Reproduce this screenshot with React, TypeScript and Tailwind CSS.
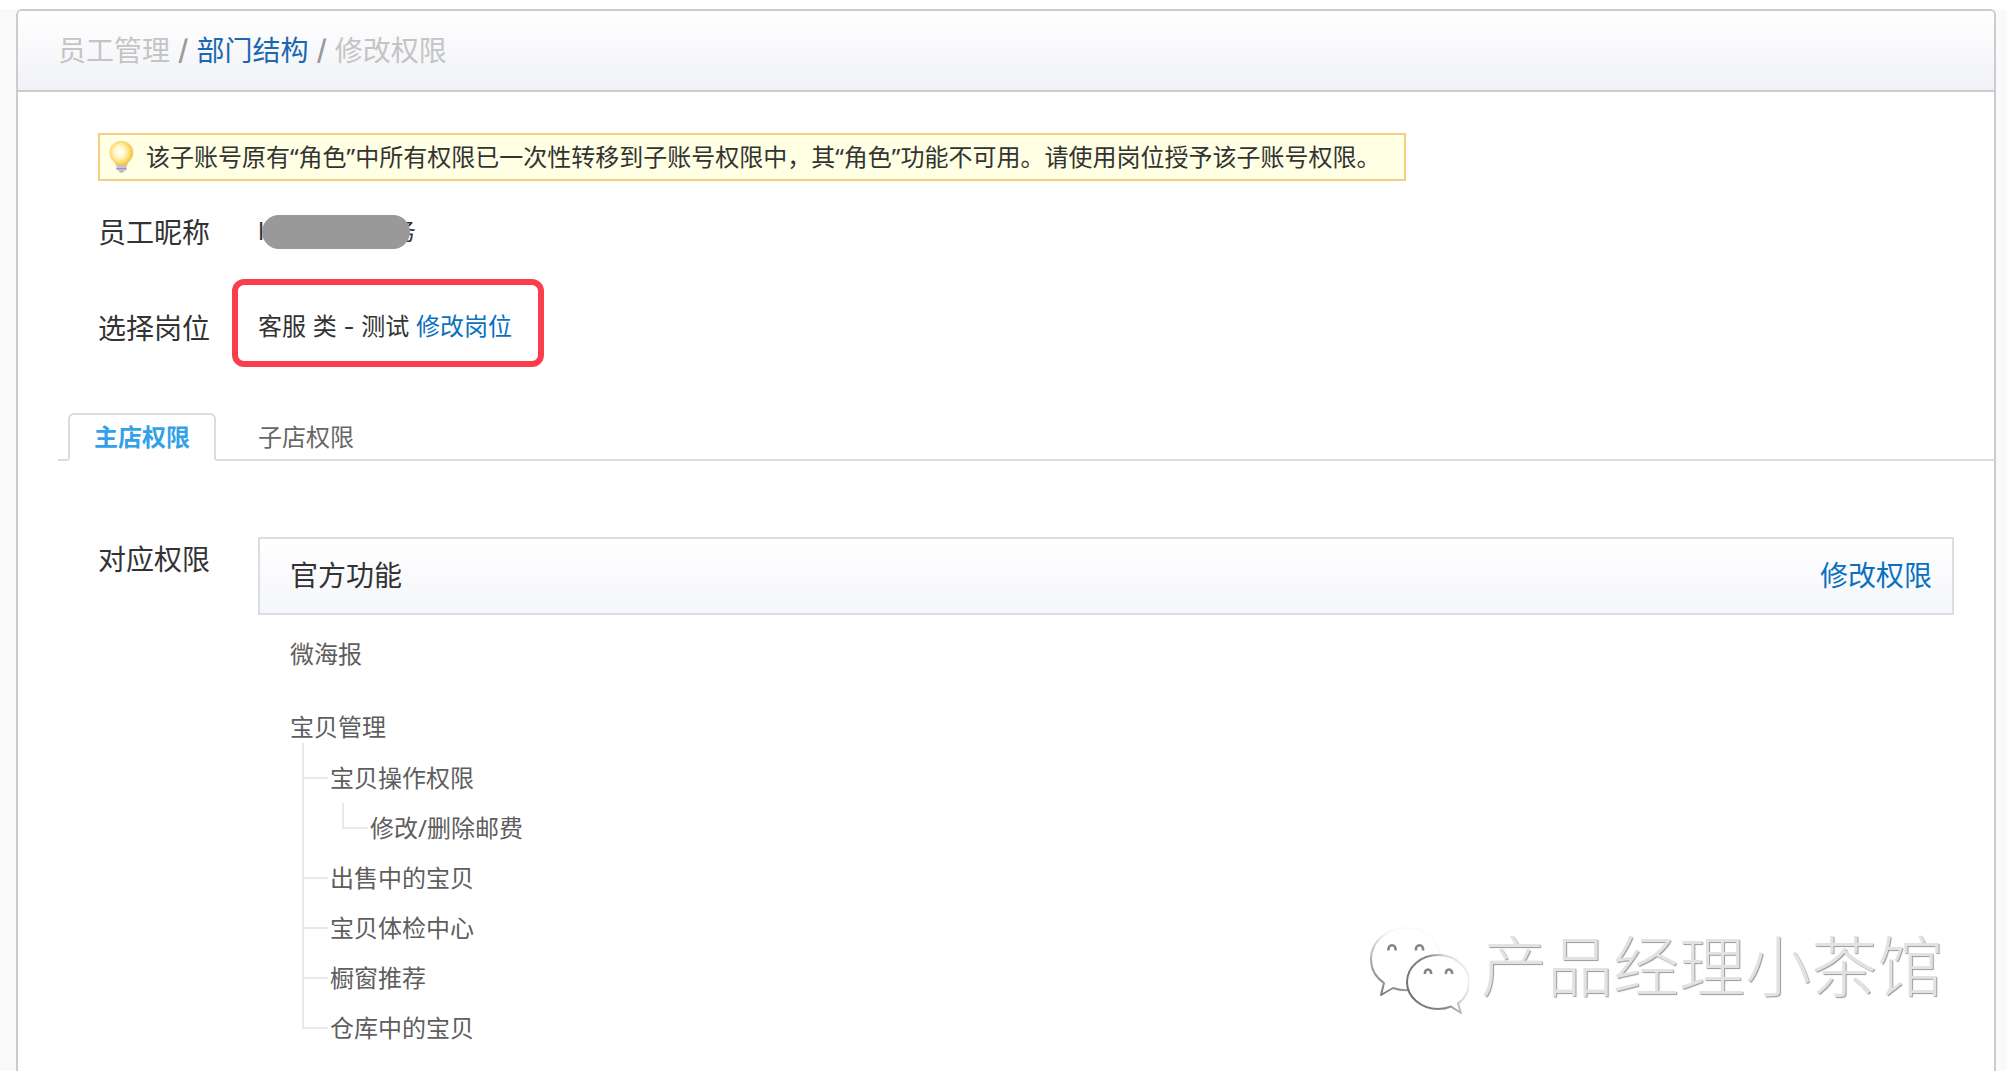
import { clsx } from 'clsx'

type Permission = {
  name: string
  children?: Permission[]
}

const tabs = [
  { name: '主店权限', active: true },
  { name: '子店权限', active: false },
]

const permissions: Permission[] = [
  {
    name: '宝贝操作权限',
    children: [{ name: '修改/删除邮费' }],
  },
  { name: '出售中的宝贝' },
  { name: '宝贝体检中心' },
  { name: '橱窗推荐' },
  { name: '仓库中的宝贝' },
]

function BulbIcon() {
  return (
    <svg viewBox="0 0 28 34" className="h-[34px] w-7 shrink-0" aria-hidden="true">
      <defs>
        <radialGradient id="bulb" cx="0.42" cy="0.42" r="0.62">
          <stop offset="0" stopColor="#fffffa" />
          <stop offset="0.35" stopColor="#fff8d0" />
          <stop offset="0.7" stopColor="#fbdc68" />
          <stop offset="1" stopColor="#eeb238" />
        </radialGradient>
      </defs>
      <path
        d="M13.500 1.500C7 1.500 2 6.400 2 12.600c0 4.600 2.400 7 4.600 9.600 1.100 1.300 1.700 2.600 2 4h9.800c.3-1.400.9-2.700 2-4 2.200-2.600 4.600-5 4.600-9.600C25 6.400 20 1.500 13.500 1.500z"
        fill="url(#bulb)"
        stroke="#f5d080"
        strokeWidth="1"
      />
      <rect x="8.500" y="25.500" width="10" height="5" rx="1" fill="#c9bfe2" />
      <rect x="8.500" y="28" width="10" height="1.200" fill="#9d92be" />
      <path d="M10.500 30.500h6l-1.500 2h-3z" fill="#b3a8a8" />
    </svg>
  )
}

function ChatIcon() {
  return (
    <svg viewBox="0 0 100 92" className="h-[92px] w-[100px] shrink-0" aria-hidden="true">
      <defs>
        <linearGradient id="bigEdge" x1="0.2" y1="1" x2="0.7" y2="0.1">
          <stop offset="0" stopColor="#7d7d7d" />
          <stop offset="0.5" stopColor="#c4c4c4" />
          <stop offset="0.8" stopColor="#f6f6f6" />
          <stop offset="1" stopColor="#fbfbfb" />
        </linearGradient>
        <linearGradient id="smallEdge" x1="0" y1="0.6" x2="1" y2="0.25">
          <stop offset="0" stopColor="#707070" />
          <stop offset="0.5" stopColor="#8c8c8c" />
          <stop offset="0.75" stopColor="#dadada" />
          <stop offset="1" stopColor="#f2f2f2" />
        </linearGradient>
      </defs>
      <g fill="#fff" strokeWidth="2" strokeLinejoin="round">
        <path
          d="M37 5C17.700 5 2 18.900 2 36c0 10 5 18.500 13 24l-3 12 12-7c4 1.500 8.500 2.200 13 2.200 19.300 0 35-13.900 35-31.200S56.300 5 37 5z"
          stroke="url(#bigEdge)"
        />
        <path
          d="M69 32c-17.100 0-31 12.100-31 27s13.900 27 31 27c5 0 9-.8 13-2.500l10 6.500-3-9.500c7-5 11-12.500 11-21.500 0-14.900-13.900-27-31-27z"
          stroke="url(#smallEdge)"
        />
      </g>
      <g fill="none" stroke="#858585" strokeWidth="2.600">
        <path d="M19.500 27.500c-1-7 8-7 7 0" />
        <path d="M47 27.500c-1-7 8-7 7 0" />
        <path d="M56 51c-1-6 7-6 6 0" />
        <path d="M77 51c-1-6 7-6 6 0" />
      </g>
    </svg>
  )
}

function PermissionTree({ items }: { items: Permission[] }) {
  return (
    <ul>
      {items.map((item, index) => {
        const last = index === items.length - 1
        return (
          <li key={item.name} className="flex">
            <div className="flex w-7 shrink-0 flex-col">
              <div className="flex h-[26px] items-end gap-0.5 border-l-2 border-[#e8e8e8]">
                <span className="h-0.5 w-6 bg-[#e8e8e8]" />
              </div>
              {!last && <div className="flex-1 border-l-2 border-[#e8e8e8]" />}
            </div>
            <div>
              <div className="h-[50px] leading-[50px]">{item.name}</div>
              {item.children && (
                <div className="ml-3">
                  <PermissionTree items={item.children} />
                </div>
              )}
            </div>
          </li>
        )
      })}
    </ul>
  )
}

export default function App() {
  return (
    <div className="relative flex min-h-screen flex-col bg-[#fafafa] font-['Noto_Sans','Noto_Sans_CJK_SC',sans-serif] text-2xl text-[#333]">
      <div className="h-[9px] bg-white" />
      <div className="mr-[11px] ml-4 flex-1 rounded-t-md border-2 border-b-0 border-[#ccc] bg-white">
        <header className="rounded-t-sm border-b-2 border-[#ccc] bg-linear-to-b from-white to-[#f1f2f7] px-10">
          <nav className="flex h-[79px] items-center gap-2 text-[28px] text-[#c4c4c4]">
            <span>员工管理</span>
            <span className="font-['Inter',sans-serif] font-medium text-[#999]">/</span>
            <a href="#" className="text-[#1a67b2]">部门结构</a>
            <span className="font-['Inter',sans-serif] font-medium text-[#999]">/</span>
            <span>修改权限</span>
          </nav>
        </header>

        <section className="px-20 pt-[41px]">
          <p className="inline-flex h-12 items-center gap-2.5 border-2 border-[#f6cd86] bg-[#ffffe3] pr-6 pl-2">
            <BulbIcon />
            该子账号原有“角色”中所有权限已一次性转移到子账号权限中，其“角色”功能不可用。请使用岗位授予该子账号权限。
          </p>

          <dl>
            <div className="mt-7 flex h-12 items-center">
              <dt className="w-40 text-[28px]">员工昵称</dt>
              <dd className="relative flex w-[158px] justify-between pb-1">
                <span>l</span>
                <span>务</span>
                {/* nickname is masked */}
                <span className="absolute top-0 right-1.5 bottom-0.5 left-1 rounded-full bg-[#999]" />
              </dd>
            </div>
            <div className="mt-12 flex h-12 items-center">
              <dt className="w-40 text-[28px]">选择岗位</dt>
              <dd className="relative pb-1 font-['Inter','Noto_Sans_CJK_SC',sans-serif]">
                客服 类 - 测试 <a href="#" className="text-[#0a70c0]">修改岗位</a>
                <span className="pointer-events-none absolute -top-8 -right-8 -bottom-5 -left-[26px] rounded-xl border-[6px] border-[#fa3e4b]" />
              </dd>
            </div>
          </dl>
        </section>

        <nav className="mt-[60px] ml-10 flex h-12 border-b-2 border-[#dcdcdc] pl-2.5">
          {tabs.map((tab) => (
            <button
              key={tab.name}
              type="button"
              className={clsx(
                'h-12 border-2 px-6',
                tab.active
                  ? 'rounded-t-md border-[#dcdcdc] border-b-white bg-white font-bold text-[#33a0ea]'
                  : 'ml-4 border-transparent text-[#666]'
              )}
            >
              {tab.name}
            </button>
          ))}
        </nav>

        <section className="mt-[76px] flex pr-10 pl-20">
          <h2 className="w-40 shrink-0 text-[28px] leading-[44px]">对应权限</h2>
          <div className="flex-1 text-[#5e5e5e]">
            <div className="flex h-[78px] items-center justify-between border-2 border-[#dcdde2] bg-linear-to-b from-white to-[#f5f6fb] pr-5 pl-[30px] text-[28px]">
              <h3 className="text-[#333]">官方功能</h3>
              <a href="#" className="text-[#0a70c0]">修改权限</a>
            </div>
            <div className="pl-8">
              <div className="mt-3.5 leading-[50px]">微海报</div>
              <div className="mt-8 leading-8">宝贝管理</div>
              <div className="ml-3">
                <div className="h-2.5 border-l-2 border-[#e8e8e8]" />
                <PermissionTree items={permissions} />
              </div>
            </div>
          </div>
        </section>
      </div>

      <div className="absolute right-16 bottom-14 flex items-start gap-3">
        <ChatIcon />
        <span className="text-[66px] leading-[84px] font-light text-[#e2e2e2] [text-shadow:1px_1px_1px_#999]">
          产品经理小茶馆
        </span>
      </div>
    </div>
  )
}
